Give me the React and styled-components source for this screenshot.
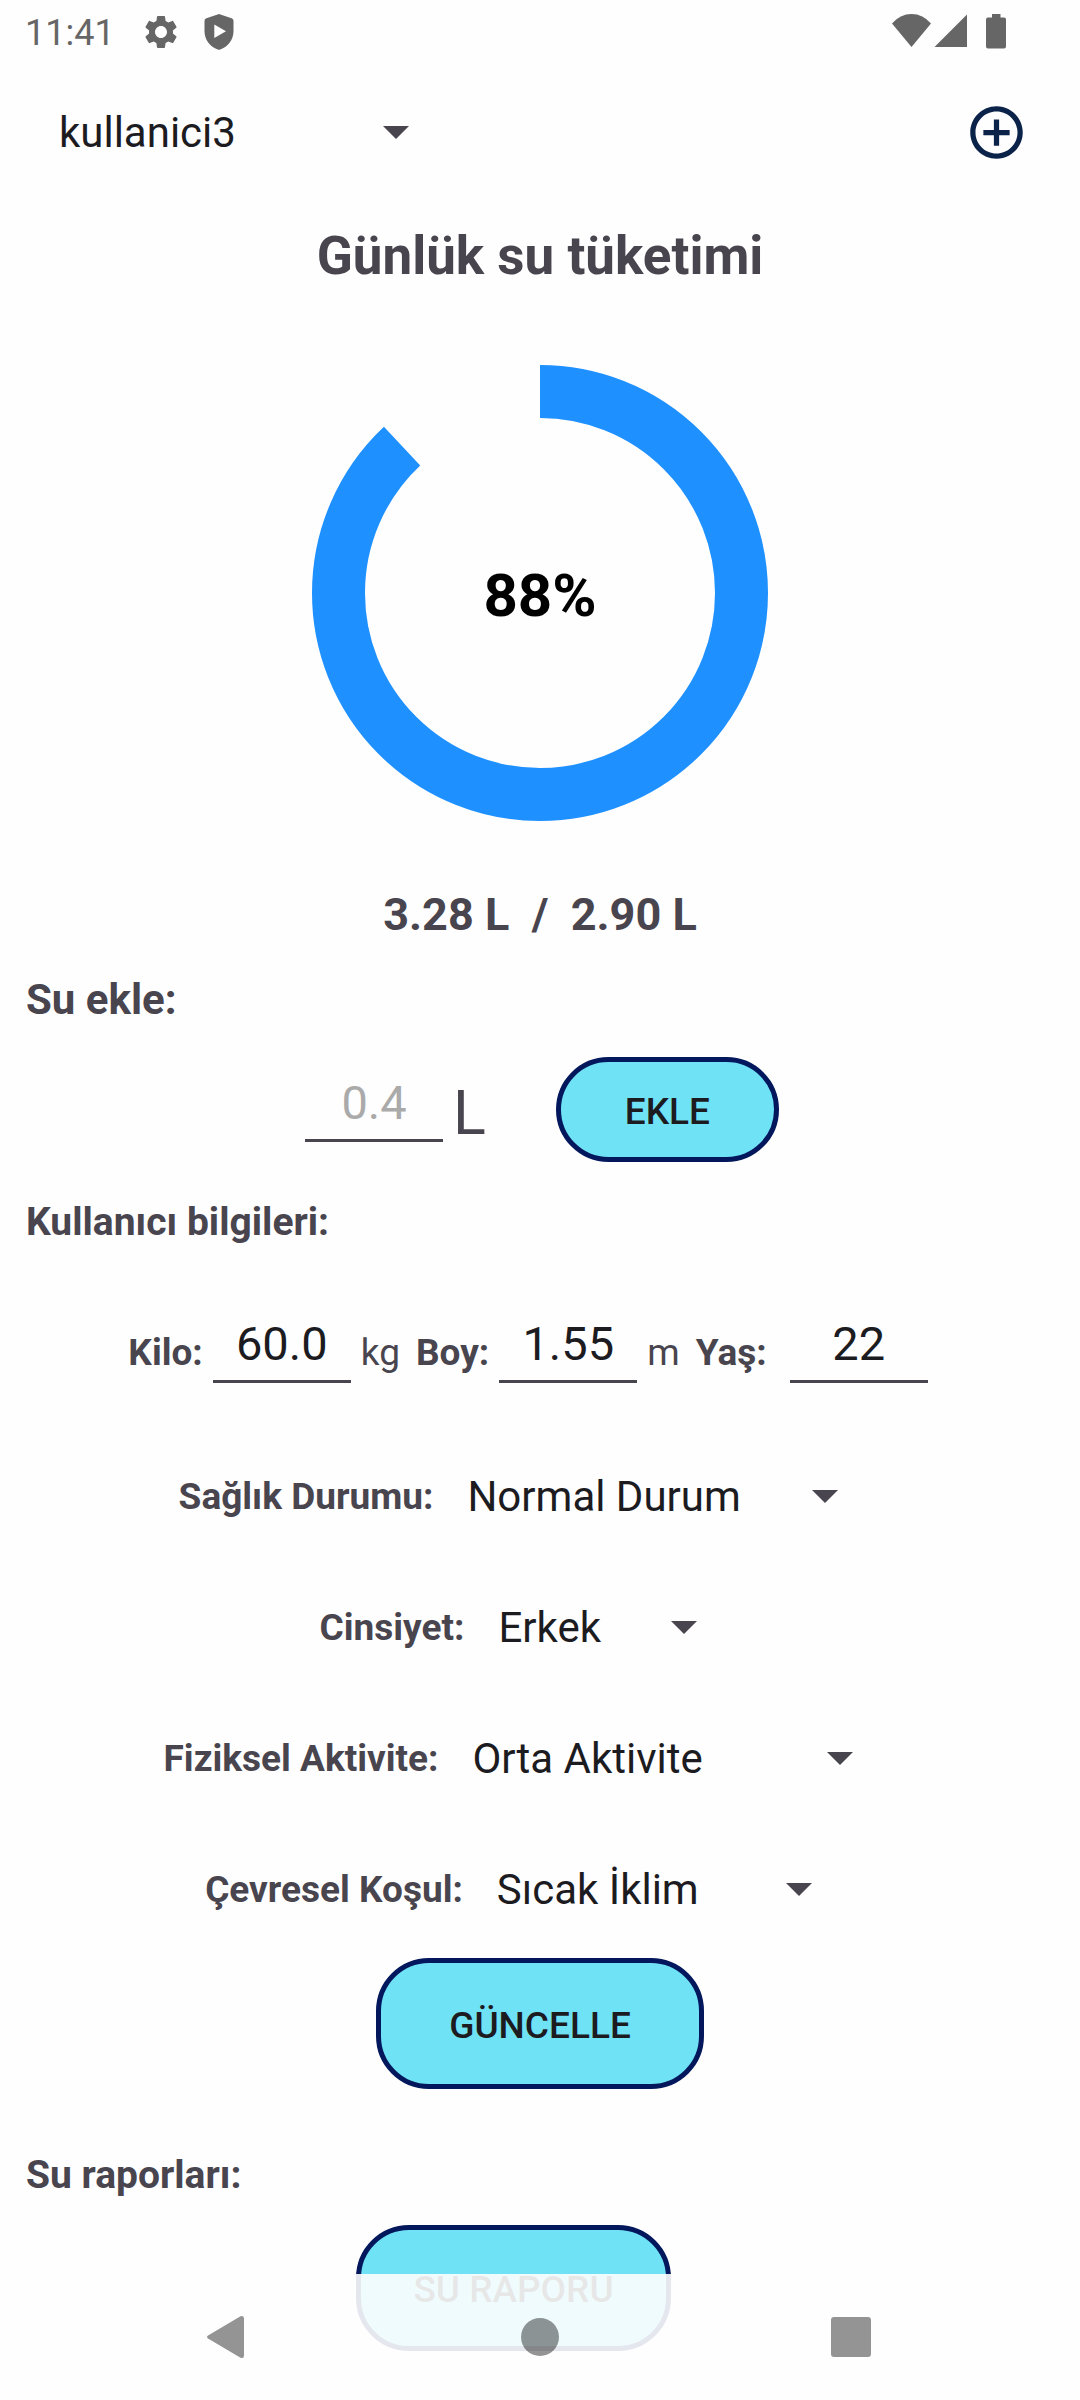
import React, { useState } from "react";
import styled, { createGlobalStyle } from "styled-components";

const color = {
  page: "#fefefe",
  text: "#49454f",
  strong: "#1c1b1f",
  status: "#666666",
  ring: "#1e90ff",
  button: "#70e2f6",
  outline: "#03185c",
  add: "#0b2249",
  hint: "#aaaaaa",
};

const GlobalStyle = createGlobalStyle`
  *, *::before, *::after { box-sizing: border-box; }
  body {
    margin: 0;
    background: ${color.page};
    color: ${color.text};
    font-family: Roboto, "Noto Sans", sans-serif;
  }
  button, input, select { font-family: inherit; }
`;

const Screen = styled.div`
  display: flex;
  flex-direction: column;
  min-height: 100vh;
`;

const StatusBar = styled.div`
  display: flex;
  align-items: center;
  justify-content: space-between;
  height: 64px;
  padding: 0 73px 0 25px;
  color: ${color.status};
`;

const StatusGroup = styled.div`
  display: flex;
  align-items: center;
  gap: ${(p) => p.$gap}px;
`;

const Clock = styled.span`
  padding-top: 2px;
  font-size: 36px;
  line-height: 46px;
  margin-right: 3px;
`;

const Header = styled.header`
  display: flex;
  align-items: center;
  justify-content: space-between;
  height: 136px;
  padding: 0 52px 0 37px;
`;

const AddButton = styled.button`
  display: flex;
  padding: 0;
  border: 0;
  background: none;
  color: ${color.add};
  cursor: pointer;
`;

const Main = styled.main`
  display: flex;
  flex-direction: column;
`;

const Title = styled.h1`
  margin: 24px 0 0;
  font-size: 53px;
  line-height: 64px;
  font-weight: 700;
  text-align: center;
`;

const Gauge = styled.div`
  display: grid;
  place-items: center;
  margin-top: 77px;

  > * { grid-area: 1 / 1; }
`;

const Percent = styled.span`
  padding-top: 6px;
  color: #000;
  font-size: 60px;
  line-height: 68px;
  font-weight: 700;
`;

const Totals = styled.p`
  margin: 67px 0 0;
  font-size: 45px;
  line-height: 54px;
  font-weight: 700;
  text-align: center;
  white-space: pre-wrap;
`;

const SectionTitle = styled.h2`
  margin: ${(p) => p.$top}px 0 0;
  padding-left: 26px;
  font-size: ${(p) => (p.$large ? 42 : 39)}px;
  line-height: ${(p) => (p.$large ? 50 : 46)}px;
  font-weight: 700;
`;

const AddRow = styled.form`
  display: flex;
  align-items: center;
  justify-content: center;
  margin-top: 32px;
  padding-left: 4px;
`;

const Field = styled.input`
  width: 138px;
  height: 73px;
  padding: 0 0 3px;
  border: 0;
  border-bottom: 3px solid ${color.text};
  border-radius: 0;
  outline: 0;
  background: none;
  color: ${color.strong};
  font-size: 47px;
  text-align: center;

  &::placeholder { color: ${color.hint}; opacity: 1; }
`;

const AmountBox = styled.div`
  display: flex;
  padding-bottom: 8px;
`;

const LitreUnit = styled.label`
  margin: 0 70px 0 10px;
  padding-top: 6px;
  font-size: 61px;
  line-height: 72px;
`;

const BodyRow = styled.div`
  display: flex;
  align-items: center;
  justify-content: center;
  gap: 16px;
  margin: 65px 0 48px;
  padding-right: 24px;
`;

const Measure = styled.div`
  display: flex;
  align-items: center;
  gap: 10px;
`;

const MeasureLabel = styled.label`
  padding-top: 12px;
  padding-right: ${(p) => (p.$spaced ? 13 : 0)}px;
  font-size: 37px;
  line-height: 44px;
  font-weight: 700;
`;

const Unit = styled.span`
  padding-top: 12px;
  font-size: 37px;
  line-height: 44px;
`;

const ChoiceRow = styled.div`
  display: flex;
  align-items: center;
  justify-content: center;
  gap: 12px;
  height: 131px;
`;

const ChoiceLabel = styled.label`
  font-size: 37px;
  line-height: 44px;
  font-weight: 700;
`;

const SpinnerBox = styled.span`
  display: grid;
  align-items: center;
  width: ${(p) => p.$width}px;

  > * { grid-area: 1 / 1; }

  svg {
    justify-self: end;
    margin-right: 63px;
    color: ${color.text};
    pointer-events: none;
  }
`;

const SpinnerSelect = styled.select`
  appearance: none;
  width: 100%;
  height: 63px;
  padding: 0 96px 0 22px;
  border: 0;
  outline: 0;
  background: none;
  color: ${color.strong};
  font-size: 42px;
`;

const PillButton = styled.button`
  width: ${(p) => p.$width}px;
  height: ${(p) => p.$height}px;
  padding: 4px 0 0;
  border: 5px solid ${color.outline};
  border-radius: 53px;
  background: ${color.button};
  color: ${color.strong};
  font-size: 37px;
  line-height: 44px;
  font-weight: 500;
  cursor: pointer;
`;

const ActionRow = styled.div`
  display: flex;
  justify-content: center;
  margin-top: ${(p) => p.$top}px;
  padding-right: ${(p) => p.$shift || 0}px;
`;

const NavBar = styled.nav`
  position: fixed;
  right: 0;
  bottom: 0;
  left: 0;
  display: flex;
  align-items: center;
  justify-content: center;
  gap: 248px;
  height: 126px;
  background: rgba(254, 254, 254, 0.9);
`;

const NavButton = styled.button`
  display: flex;
  padding: 0;
  border: 0;
  background: none;
  color: rgba(0, 0, 0, 0.42);
  cursor: pointer;
`;

function GearIcon() {
  return (
    <svg width="40" height="40" viewBox="0 0 24 24" fill="currentColor" aria-hidden="true">
      <path d="M19.14 12.94c.04-.3.06-.61.06-.94 0-.32-.02-.64-.07-.94l2.03-1.58c.18-.14.23-.41.12-.61l-1.92-3.32c-.12-.22-.37-.29-.59-.22l-2.39.96c-.5-.38-1.03-.7-1.62-.94l-.36-2.54c-.04-.24-.24-.41-.48-.41h-3.84c-.24 0-.43.17-.47.41l-.36 2.54c-.59.24-1.13.57-1.62.94l-2.39-.96c-.22-.08-.47 0-.59.22L2.74 8.87c-.12.21-.08.47.12.61l2.03 1.58c-.05.3-.09.63-.09.94s.02.64.07.94l-2.03 1.58c-.18.14-.23.41-.12.61l1.92 3.32c.12.22.37.29.59.22l2.39-.96c.5.38 1.03.7 1.62.94l.36 2.54c.05.24.24.41.48.41h3.84c.24 0 .44-.17.47-.41l.36-2.54c.59-.24 1.13-.56 1.62-.94l2.39.96c.22.08.47 0 .59-.22l1.92-3.32c.12-.22.07-.47-.12-.61l-2.01-1.58zM12 15.6c-1.98 0-3.6-1.62-3.6-3.6s1.62-3.6 3.6-3.6 3.6 1.62 3.6 3.6-1.62 3.6-3.6 3.6z" />
    </svg>
  );
}

function ShieldIcon() {
  return (
    <svg width="30" height="36" viewBox="0 0 30 36" fill="currentColor" aria-hidden="true">
      <path
        fillRule="evenodd"
        d="M13.6.4Q15-.2 16.4.4L27.600 4.300Q29.500 5 29.500 7V17C29.500 26 24 32.500 16.200 35.600Q15 36.100 13.800 35.600C6 32.500.5 26 .5 17V7Q.5 5 2.400 4.300ZM10.300 10.500V24L22 17.200Z"
      />
    </svg>
  );
}

function SignalIcons() {
  return (
    <svg width="115" height="36" viewBox="0 0 115 36" fill="currentColor" aria-hidden="true">
      <path d="M0 9.500Q8 0 19.500 0T39 9.500L19.500 33Z" />
      <path d="M42.500 33L75 .5V33Z" />
      <path d="M100 0h8.500v3.500h3.500q2 0 2 2v27q0 2-2 2h-16q-2 0-2-2v-27q0-2 2-2h4z" />
    </svg>
  );
}

function CaretIcon() {
  return (
    <svg width="26" height="13" viewBox="0 0 26 13" fill="currentColor" aria-hidden="true">
      <path d="M0 0H26L13 13Z" />
    </svg>
  );
}

function AddIcon() {
  return (
    <svg width="63" height="63" viewBox="0 0 24 24" fill="currentColor" aria-hidden="true">
      <path d="M13 7h-2v4H7v2h4v4h2v-4h4v-2h-4V7zm-1-5C6.480 2 2 6.480 2 12s4.480 10 10 10 10-4.480 10-10S17.520 2 12 2zm0 18c-4.410 0-8-3.590-8-8s3.590-8 8-8 8 3.590 8 8-3.590 8-8 8z" />
    </svg>
  );
}

function Ring({ value }) {
  const size = 456;
  const stroke = 53;
  const radius = (size - stroke) / 2;
  return (
    <svg width={size} height={size} viewBox={`0 0 ${size} ${size}`} fill="none" aria-hidden="true">
      <circle
        cx={size / 2}
        cy={size / 2}
        r={radius}
        stroke={color.ring}
        strokeWidth={stroke}
        pathLength="100"
        strokeDasharray={`${value} 100`}
        transform={`rotate(-90 ${size / 2} ${size / 2})`}
      />
    </svg>
  );
}

function Spinner({ options, width, ...rest }) {
  const [value, setValue] = useState(options[0]);
  return (
    <SpinnerBox $width={width}>
      <SpinnerSelect value={value} onChange={(e) => setValue(e.target.value)} {...rest}>
        {options.map((o) => (
          <option key={o}>{o}</option>
        ))}
      </SpinnerSelect>
      <CaretIcon />
    </SpinnerBox>
  );
}

const measures = [
  { id: "kilo", label: "Kilo:", value: "60.0", unit: "kg" },
  { id: "boy", label: "Boy:", value: "1.55", unit: "m" },
  { id: "yas", label: "Yaş:", value: "22" },
];

const choices = [
  { id: "saglik", label: "Sağlık Durumu:", width: 456, options: ["Normal Durum"] },
  { id: "cinsiyet", label: "Cinsiyet:", width: 284, options: ["Erkek", "Kadın"] },
  { id: "aktivite", label: "Fiziksel Aktivite:", width: 466, options: ["Orta Aktivite"] },
  { id: "kosul", label: "Çevresel Koşul:", width: 400, options: ["Sıcak İklim"] },
];

export default function App() {
  return (
    <Screen lang="tr">
      <GlobalStyle />
      <StatusBar>
        <StatusGroup $gap={23}>
          <Clock>11:41</Clock>
          <GearIcon />
          <ShieldIcon />
        </StatusGroup>
        <SignalIcons />
      </StatusBar>

      <Header>
        <Spinner aria-label="Kullanıcı" options={["kullanici3"]} width={435} />
        <AddButton type="button" aria-label="Kullanıcı ekle">
          <AddIcon />
        </AddButton>
      </Header>

      <Main>
        <Title>Günlük su tüketimi</Title>
        <Gauge>
          <Ring value={88} />
          <Percent>88%</Percent>
        </Gauge>
        <Totals>{"3.28 L  /  2.90 L"}</Totals>

        <SectionTitle $large $top={33}>Su ekle:</SectionTitle>
        <AddRow onSubmit={(e) => e.preventDefault()}>
          <AmountBox>
            <Field id="miktar" placeholder="0.4" inputMode="decimal" />
          </AmountBox>
          <LitreUnit htmlFor="miktar">L</LitreUnit>
          <PillButton type="submit" $width={223} $height={105}>EKLE</PillButton>
        </AddRow>

        <SectionTitle $top={37}>Kullanıcı bilgileri:</SectionTitle>
        <BodyRow>
          {measures.map((m) => (
            <Measure key={m.id}>
              <MeasureLabel htmlFor={m.id} $spaced={!m.unit}>{m.label}</MeasureLabel>
              <Field id={m.id} defaultValue={m.value} inputMode="decimal" />
              {m.unit && <Unit>{m.unit}</Unit>}
            </Measure>
          ))}
        </BodyRow>
        {choices.map((c) => (
          <ChoiceRow key={c.id}>
            <ChoiceLabel htmlFor={c.id}>{c.label}</ChoiceLabel>
            <Spinner id={c.id} options={c.options} width={c.width} />
          </ChoiceRow>
        ))}
        <ActionRow $top={3}>
          <PillButton type="button" $width={328} $height={131}>GÜNCELLE</PillButton>
        </ActionRow>

        <SectionTitle $top={63}>Su raporları:</SectionTitle>
        <ActionRow $top={27} $shift={53}>
          <PillButton type="button" $width={315} $height={126}>SU RAPORU</PillButton>
        </ActionRow>
      </Main>

      <NavBar>
        <NavButton type="button" aria-label="Geri">
          <svg width="64" height="44" viewBox="0 0 64 44" fill="currentColor" aria-hidden="true">
            <path d="M12 20.500L44.500 1.300Q48 0 48 3.500V40.500Q48 44 44.500 42.700L12 23.500Q10 22 12 20.500Z" />
          </svg>
        </NavButton>
        <NavButton type="button" aria-label="Ana ekran">
          <svg width="64" height="44" viewBox="0 0 64 44" fill="currentColor" aria-hidden="true">
            <circle cx="32" cy="22" r="19" />
          </svg>
        </NavButton>
        <NavButton type="button" aria-label="Son uygulamalar">
          <svg width="64" height="44" viewBox="0 0 64 44" fill="currentColor" aria-hidden="true">
            <rect x="11" y="2" width="40" height="40" rx="3" />
          </svg>
        </NavButton>
      </NavBar>
    </Screen>
  );
}
